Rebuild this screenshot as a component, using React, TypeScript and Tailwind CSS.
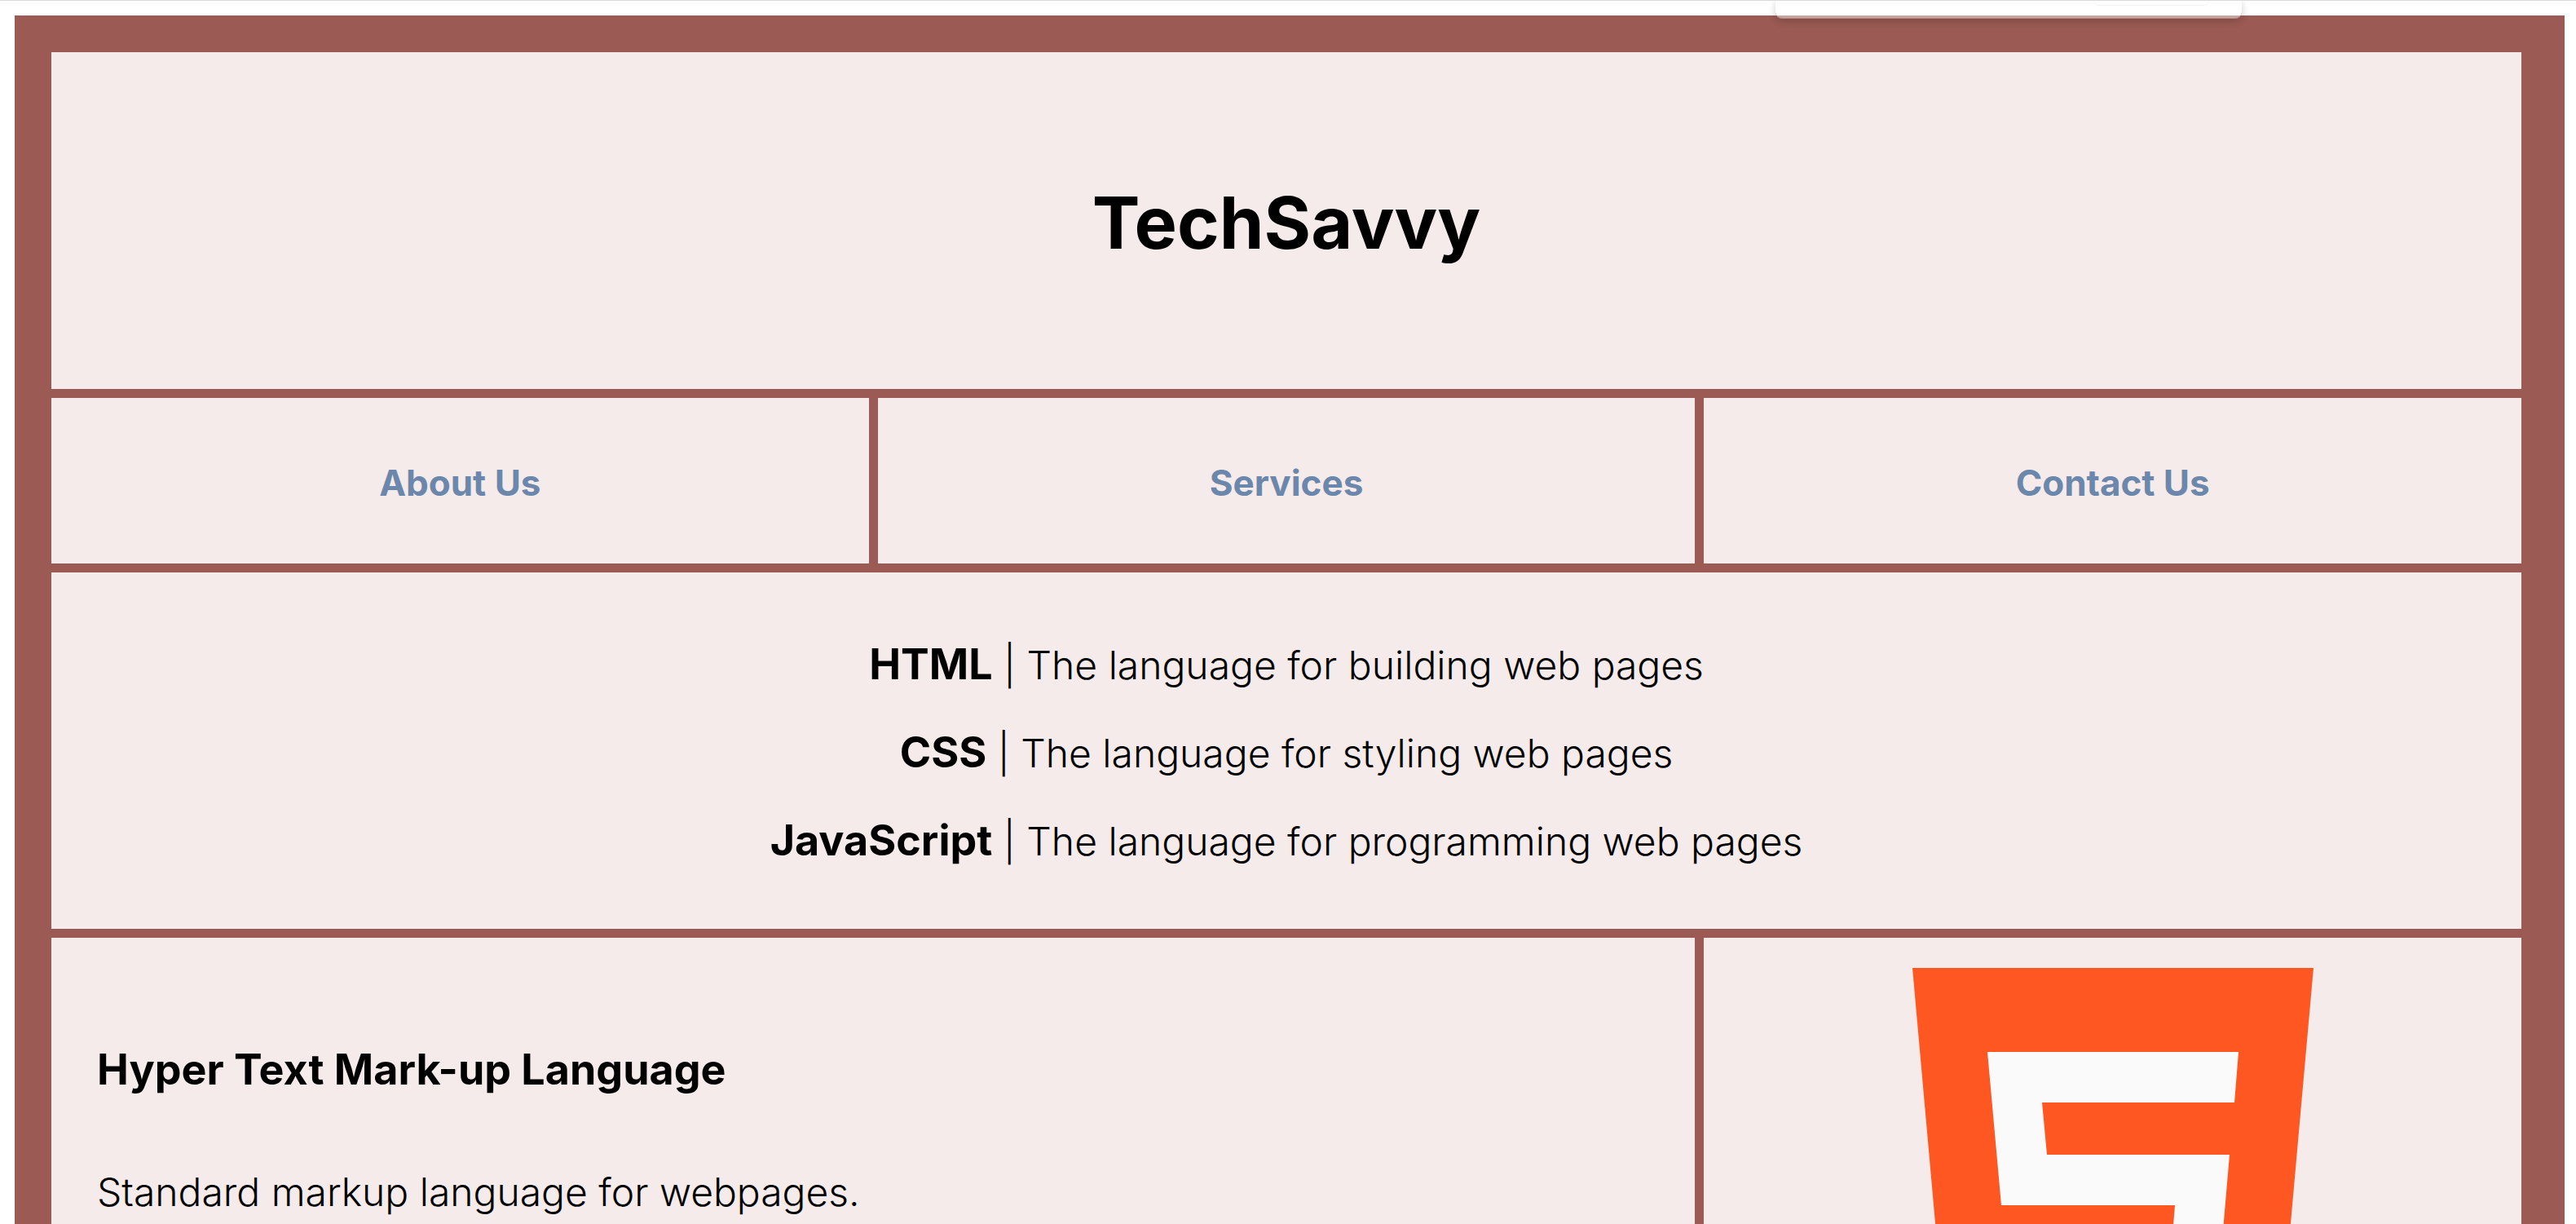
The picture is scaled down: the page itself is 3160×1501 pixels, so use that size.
const navItems = ["About Us", "Services", "Contact Us"];

const languages = [
  { name: "HTML", text: "The language for building web pages" },
  { name: "CSS", text: "The language for styling web pages" },
  { name: "JavaScript", text: "The language for programming web pages" },
];

function Html5Logo() {
  return (
    <svg viewBox="0 0 492 550" className="h-[550px] w-[492px]" role="img" aria-label="HTML5 logo">
      <path d="M0 0H492L448 492L246 550L44 492Z" fill="#ff5722" />
      <path
        d="M92 103H400L395 165H159L165 229H389L371 438L246 474L121 438L113 345H173L178 390L246 410L314 390L322 291H109Z"
        fill="#fafafa"
      />
    </svg>
  );
}

function FloatingPanel() {
  return (
    <div className="absolute -top-px right-[410px] flex h-[23px] w-[572px] justify-end rounded-b-lg border-b border-[#b08880] bg-white/45 pr-10 shadow-[0_3px_10px_rgba(0,0,0,0.2)]">
      <div className="h-[7px] w-[142px] rounded-b-lg border border-t-0 border-gray-100" />
    </div>
  );
}

export default function App() {
  return (
    <div className="relative h-screen overflow-hidden border-t border-[#d9d9d9] bg-white pt-[18px] pr-[14px] pl-[18px] font-['Century_Gothic',Inter,sans-serif] text-[48px] text-black">
      <div className="grid grid-cols-3 gap-[11px] bg-[#9b5a54] pt-[45px] pr-[53px] pb-[45px] pl-[45px]">
        <header className="col-span-3 flex h-[413px] items-center justify-center bg-[#f5ebea] pt-1">
          <h1 className="text-[88px] leading-[108px] font-bold">TechSavvy</h1>
        </header>

        <nav className="col-span-3 grid grid-cols-3 gap-[11px]">
          {navItems.map((item) => (
            <a
              key={item}
              href="#"
              className="flex h-[203px] items-center justify-center bg-[#f5ebea] pt-1 text-[44px] font-bold text-[#6b87ab]"
            >
              {item}
            </a>
          ))}
        </nav>

        <ul className="col-span-3 flex h-[437px] flex-col items-center justify-center bg-[#f5ebea] pt-1">
          {languages.map((language) => (
            <li key={language.name} className="h-[108px] leading-[108px] font-light whitespace-nowrap">
              <strong className="text-[52px] font-bold">{language.name}</strong> | {language.text}
            </li>
          ))}
        </ul>

        <section className="col-span-2 bg-[#f5ebea] px-14 pt-[130px] pb-14">
          <h2 className="text-[52px] leading-[64px] font-bold">Hyper Text Mark-up Language</h2>
          <p className="mt-[88px] leading-[60px] font-light">Standard markup language for webpages.</p>
        </section>

        <figure className="flex justify-center bg-[#f5ebea] pt-[37px] pb-[37px]">
          <Html5Logo />
        </figure>
      </div>
      <FloatingPanel />
    </div>
  );
}
